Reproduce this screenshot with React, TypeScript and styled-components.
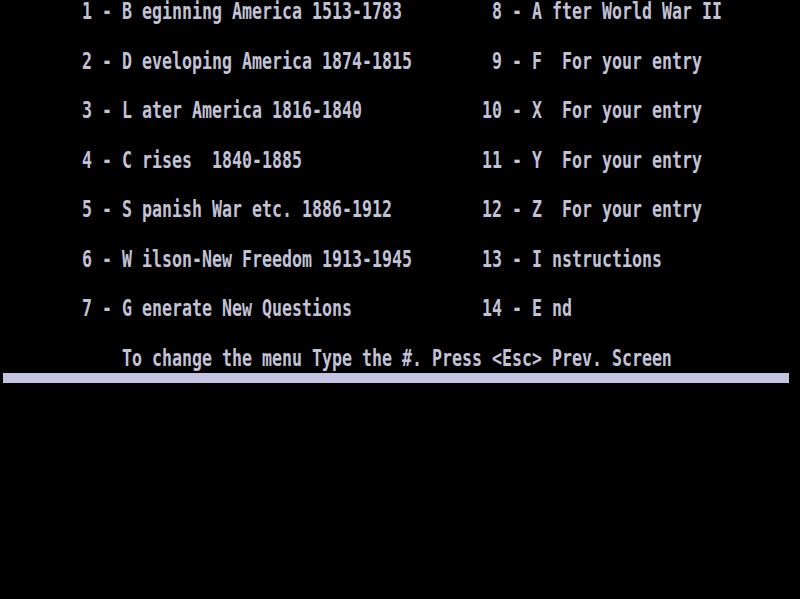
import React from 'react';
import styled, { createGlobalStyle } from 'styled-components';

// text-mode screen: 80 columns of 10px, menu rows double spaced
const CELL = 10;
const ROW = 49.5;
const GLYPH_SCALE = 0.722;

const MENU_LEFT = [
  '1 - B eginning America 1513-1783',
  '2 - D eveloping America 1874-1815',
  '3 - L ater America 1816-1840',
  '4 - C rises  1840-1885',
  '5 - S panish War etc. 1886-1912',
  '6 - W ilson-New Freedom 1913-1945',
  '7 - G enerate New Questions',
];

const MENU_RIGHT = [
  ' 8 - A fter World War II',
  ' 9 - F  For your entry',
  '10 - X  For your entry',
  '11 - Y  For your entry',
  '12 - Z  For your entry',
  '13 - I nstructions',
  '14 - E nd',
];

const GlobalStyle = createGlobalStyle`
  html, body {
    margin: 0;
    padding: 0;
    background: #000;
  }
`;

const Screen = styled.div`
  width: 800px;
  height: 599px;
  padding: 0 0 0 2px;
  box-sizing: border-box;
  background: #000;
  overflow: hidden;
`;

const Menu = styled.div`
  display: grid;
  grid-template-columns: ${40 * CELL}px ${32 * CELL}px;
  grid-auto-flow: column;
  grid-template-rows: repeat(7, ${ROW}px);
  padding-left: ${8 * CELL}px;
`;

const Line = styled.div<{ $indent?: number }>`
  height: 23px;
  padding-left: ${(props) => (props.$indent || 0) * CELL}px;
  font-family: 'DejaVu Sans Mono', 'Liberation Mono', monospace;
  font-size: 23px;
  font-weight: bold;
  line-height: 23px;
  color: #c2c2d6;
  white-space: pre;
`;

const Glyphs = styled.span`
  display: inline-block;
  transform: scaleX(${GLYPH_SCALE});
  transform-origin: left center;
`;

const StatusBar = styled.div`
  height: 10px;
  margin: 3.5px 11px 0 1px;
  background: #c3c3e2;
`;

const App: React.FC = () => (
  <>
    <GlobalStyle />
    <Screen>
      <Menu>
        {MENU_LEFT.map((item) => (
          <Line key={item}>
            <Glyphs>{item}</Glyphs>
          </Line>
        ))}
        {MENU_RIGHT.map((item) => (
          <Line key={item}>
            <Glyphs>{item}</Glyphs>
          </Line>
        ))}
      </Menu>
      <Line $indent={12}>
        <Glyphs>To change the menu Type the #. Press &lt;Esc&gt; Prev. Screen</Glyphs>
      </Line>
      <StatusBar />
    </Screen>
  </>
);

export default App;
